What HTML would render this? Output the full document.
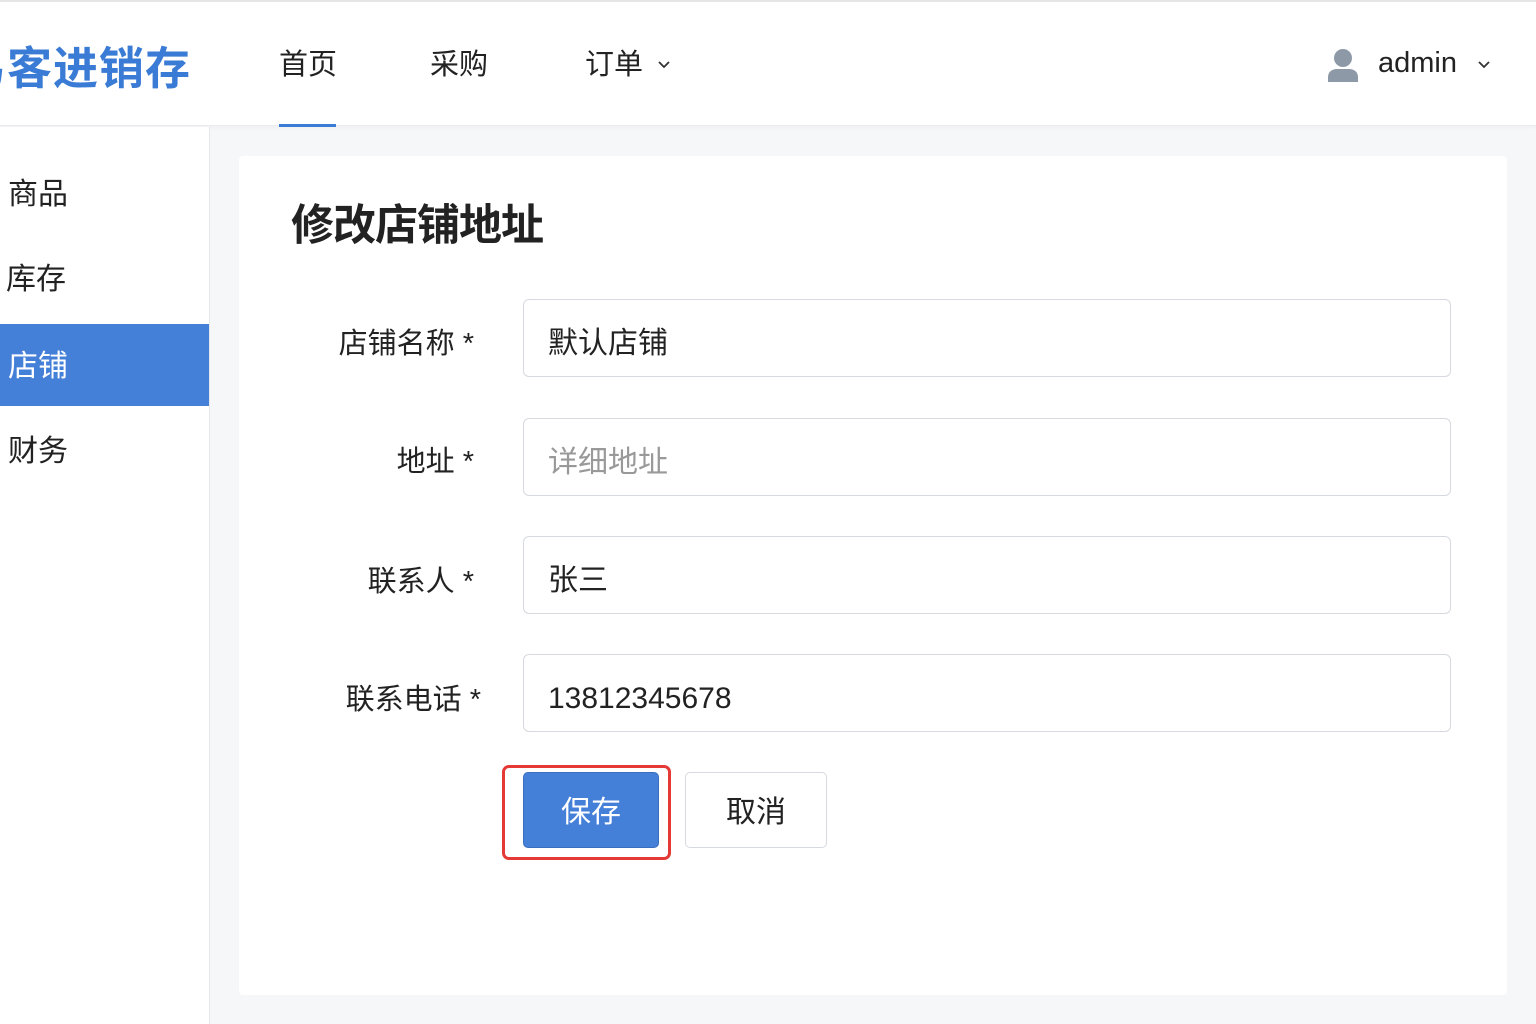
<!DOCTYPE html>
<html><head><meta charset="utf-8"><style>
*{margin:0;padding:0;box-sizing:border-box}
body{width:1536px;height:1024px;overflow:hidden;background:#f6f7f9;font-family:"Liberation Sans","Noto Sans CJK SC",sans-serif;position:relative;color:#222}
.hdr{position:absolute;left:0;top:0;width:1536px;height:126px;background:#fff;border-top:2px solid #e6e6e6;border-bottom:1px solid #e9ebee;box-shadow:0 2px 4px rgba(0,0,0,.03)}
.logo{position:absolute;left:-39px;top:30px;font-size:45px;font-weight:bold;color:#3a7bd5;letter-spacing:1px;white-space:nowrap}
.nav{position:absolute;top:39px;font-size:29px;color:#222}
.ul{position:absolute;left:279px;top:122px;width:57px;height:3px;background:#3a7bd5}
.side{position:absolute;left:0;top:127px;width:210px;height:897px;background:#fff;border-right:1px solid #e6e8eb}
.si{position:absolute;left:8px;font-size:30px;color:#222}
.act{position:absolute;left:0;top:324px;width:209px;height:82px;background:#447fd8}
.card{position:absolute;left:239px;top:156px;width:1268px;height:839px;background:#fff;border-radius:4px}
h1{position:absolute;left:291px;top:191px;font-size:43px;font-weight:bold;color:#222;letter-spacing:-1px}
.lb{position:absolute;font-size:29px;color:#222;text-align:right;width:300px}
.in{position:absolute;left:523px;width:928px;height:78px;border:1px solid #d6d9de;border-radius:6px;background:#fff;font-size:30px;padding-left:24px;padding-top:6px;line-height:76px;color:#222}
.btn{position:absolute;height:76px;border-radius:5px;font-size:30px;text-align:center;line-height:76px}
</style></head><body>
<div class="hdr">
<div class="logo">易客进销存</div>
<div class="nav" style="left:279px">首页</div>
<div class="nav" style="left:430px">采购</div>
<div class="nav" style="left:585px">订单</div>
<svg style="position:absolute;left:657px;top:58px" width="14" height="10" viewBox="0 0 14 10"><path d="M2 2l5 5 5-5" fill="none" stroke="#333" stroke-width="1.8"/></svg>
<div class="ul"></div>
<svg style="position:absolute;left:1326px;top:45px" width="34" height="36" viewBox="0 0 34 36"><circle cx="17" cy="11" r="9" fill="#8e99a8"/><path d="M2 35v-5c0-5 4-8 9-8h12c5 0 9 3 9 8v5z" fill="#8e99a8"/></svg>
<div class="nav" style="left:1378px;top:45px">admin</div>
<svg style="position:absolute;left:1477px;top:58px" width="14" height="10" viewBox="0 0 14 10"><path d="M2 2l5 5 5-5" fill="none" stroke="#333" stroke-width="1.8"/></svg>
</div>
<div class="side"></div>
<div class="si" style="top:169px">商品</div>
<div class="si" style="top:254px;left:6px">库存</div>
<div class="act"></div>
<div class="si" style="top:341px;color:#fff">店铺</div>
<div class="si" style="top:426px">财务</div>
<div class="card"></div>
<h1>修改店铺地址</h1>
<div class="lb" style="left:174px;top:320px">店铺名称 *</div>
<div class="in" style="top:299px">默认店铺</div>
<div class="lb" style="left:174px;top:438px">地址 *</div>
<div class="in" style="top:418px;color:#999">详细地址</div>
<div class="lb" style="left:174px;top:558px">联系人 *</div>
<div class="in" style="top:536px">张三</div>
<div class="lb" style="left:181px;top:676px">联系电话 *</div>
<div class="in" style="top:654px">13812345678</div>
<div style="position:absolute;left:502px;top:765px;width:169px;height:95px;border:3px solid #e53935;border-radius:7px"></div>
<div class="btn" style="left:523px;top:772px;width:136px;background:#447fd8;color:#fff;border:1px solid #3a6fc0;padding-top:2px">保存</div>
<div class="btn" style="left:685px;top:772px;width:142px;background:#fff;border:1px solid #d6d9de;color:#222;padding-top:2px">取消</div>
</body></html>
